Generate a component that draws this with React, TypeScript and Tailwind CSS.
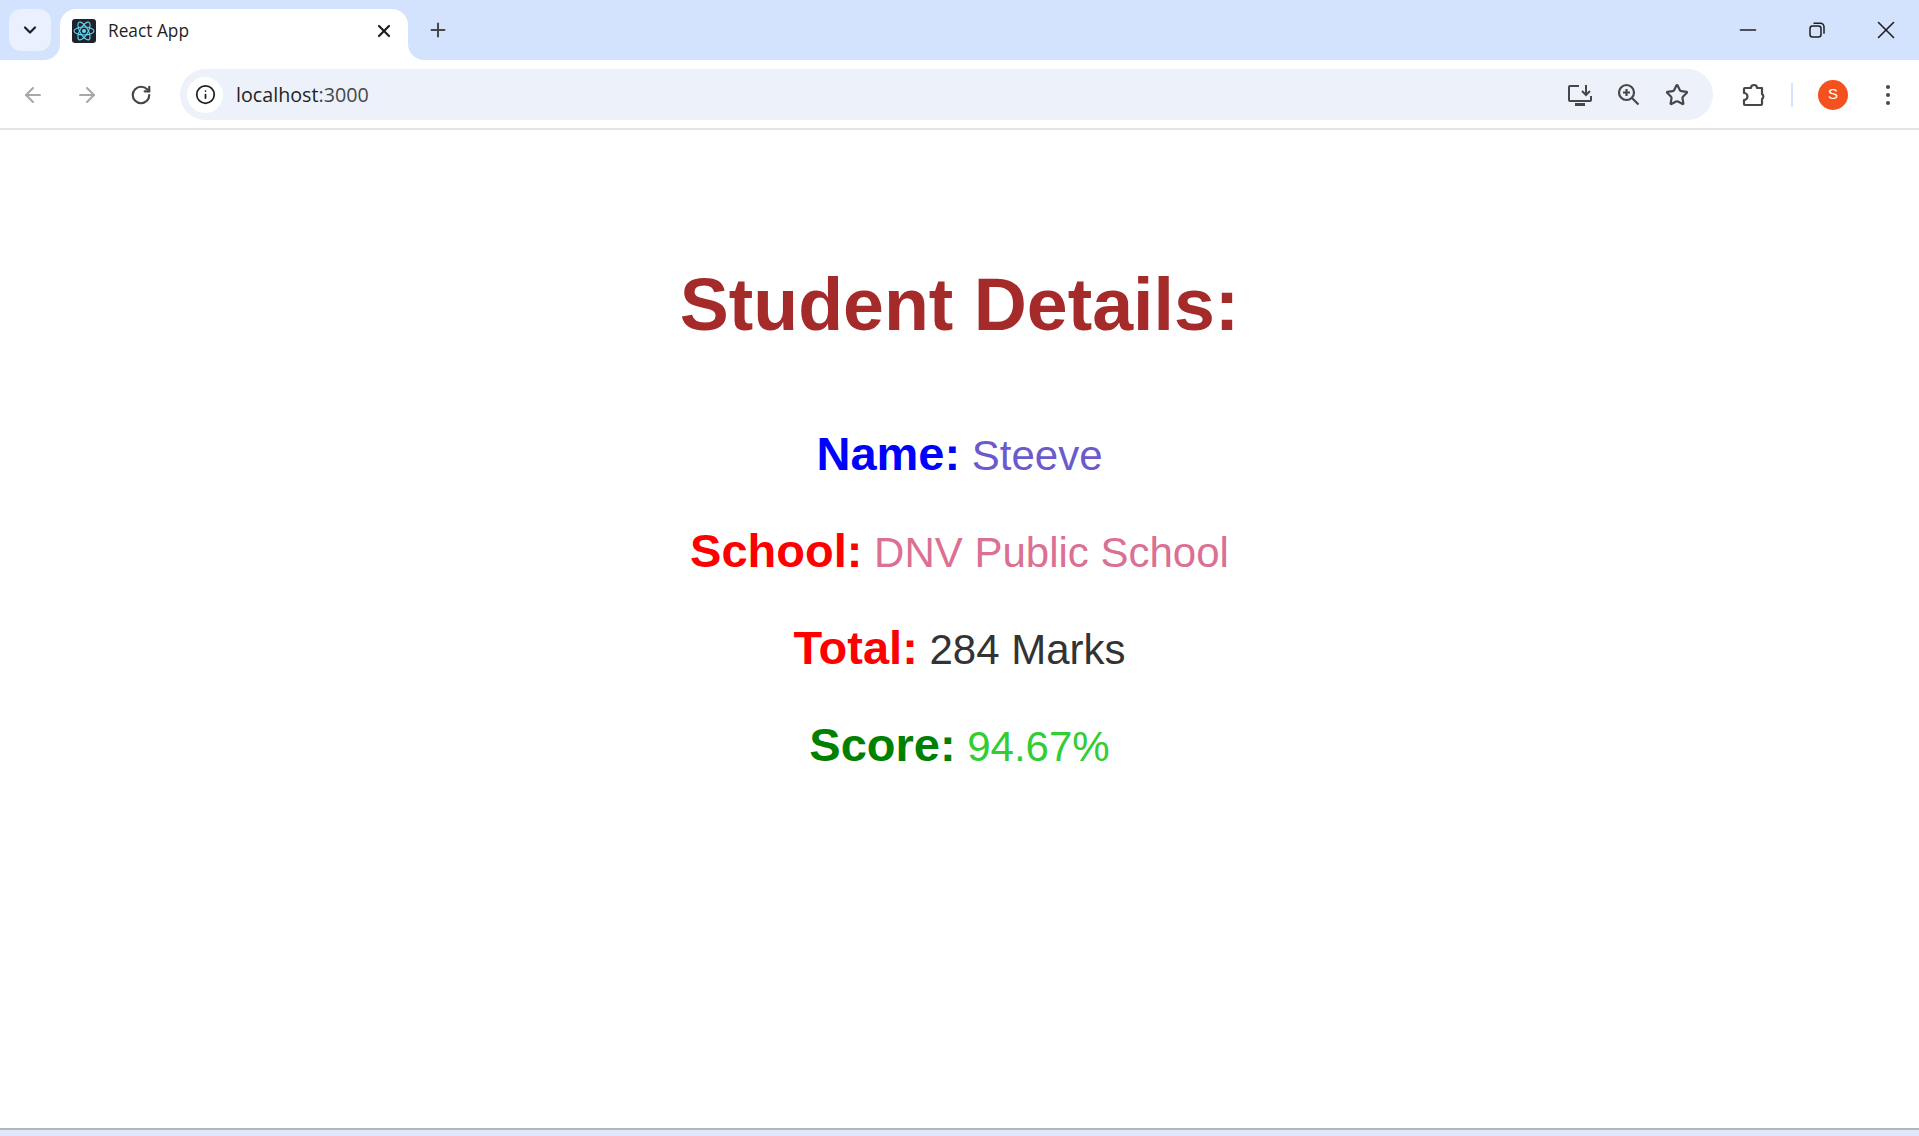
import { ChevronDown, X, Plus, ArrowLeft, ArrowRight, RotateCw, Info, Star, Minus } from "lucide-react";

const rows = [
  { label: "Name:", value: "Steeve", labelColor: "text-[#0000ff]", valueColor: "text-[#6a5acd]" },
  { label: "School:", value: "DNV Public School", labelColor: "text-[#ff0000]", valueColor: "text-[#db7093]" },
  { label: "Total:", value: "284 Marks", labelColor: "text-[#ff0000]", valueColor: "text-[#333333]" },
  { label: "Score:", value: "94.67%", labelColor: "text-[#008000]", valueColor: "text-[#32cd32]" },
];

function ReactFavicon() {
  return (
    <svg viewBox="0 0 24 24" className="h-6 w-6 rounded-[3px] bg-[#20232a]">
      <circle cx="12" cy="12" r="2" fill="#61dafb" />
      <g fill="none" stroke="#61dafb" strokeWidth="1.1">
        <ellipse cx="12" cy="12" rx="10" ry="4" />
        <ellipse cx="12" cy="12" rx="10" ry="4" transform="rotate(60 12 12)" />
        <ellipse cx="12" cy="12" rx="10" ry="4" transform="rotate(120 12 12)" />
      </g>
    </svg>
  );
}

function InstallIcon() {
  return (
    <svg viewBox="0 0 24 22" className="h-[22px] w-6" fill="none" stroke="#474747" strokeWidth="2">
      <path d="M11 2H2a1 1 0 0 0-1 1v13a1 1 0 0 0 1 1h20a1 1 0 0 0 1-1v-4" />
      <path d="M18 1v9M14 7l4 4 4-4" />
      <path d="M7 20.5h10" strokeWidth="3" />
    </svg>
  );
}

function ZoomGlyph() {
  return (
    <svg viewBox="0 0 24 24" className="ml-6 h-6 w-6" fill="none" stroke="#474747" strokeWidth="2.2">
      <circle cx="10.5" cy="9.5" r="7.5" />
      <path d="M16 15l6.5 6.5" />
      <path d="M10.5 6v7M7 9.5h7" />
    </svg>
  );
}

function ExtensionIcon() {
  return (
    <svg viewBox="0 0 24 24" className="h-6 w-6" fill="none" stroke="#474747" strokeWidth="2.2" strokeLinejoin="round">
      <path d="M3 5h6a3 3 0 0 1 6 0h5v6a3 3 0 0 1 0 5v5a1 1 0 0 1-1 1H3a1 1 0 0 1-1-1v-4a3.5 3.5 0 0 0 0-7V6a1 1 0 0 1 1-1z" />
    </svg>
  );
}

function RestoreIcon() {
  return (
    <svg viewBox="0 0 16 16" className="h-4 w-4" fill="none" stroke="#1f1f1f" strokeWidth="1.5">
      <rect x="1" y="4" width="11" height="11" rx="2.5" />
      <path d="M4.5 1.2h7a3.5 3.5 0 0 1 3.5 3.5v7" />
    </svg>
  );
}

function TabCorner({ side }: { side: "left" | "right" }) {
  return (
    <svg
      viewBox="0 0 16 16"
      className={side === "left" ? "absolute bottom-0 -left-4 h-4 w-4" : "absolute bottom-0 -right-4 h-4 w-4"}
    >
      <path d={side === "left" ? "M16 0v16H0a16 16 0 0 0 16-16z" : "M0 0v16h16A16 16 0 0 1 0 0z"} fill="#fff" />
    </svg>
  );
}

export default function App() {
  return (
    <div className="flex h-screen flex-col overflow-hidden bg-white font-['Liberation_Sans',Arial,sans-serif]">
      {/* tab strip */}
      <div className="flex h-[60px] shrink-0 bg-[#d3e3fd] pt-[9px]">
        <div className="ml-[9px] flex h-[42px] w-[42px] items-center justify-center rounded-xl bg-[#e9f0fe]">
          <ChevronDown className="h-5 w-5 text-[#1f1f1f]" strokeWidth={2.6} />
        </div>
        <div className="relative ml-[9px] flex h-[51px] w-[348px] items-center rounded-t-2xl bg-white pb-2 pl-3 pr-[14px]">
          <TabCorner side="left" />
          <TabCorner side="right" />
          <ReactFavicon />
          <span className="ml-3 font-['Open_Sans',sans-serif] text-[17.3px] text-[#1f1f1f]">React App</span>
          <X className="ml-auto h-5 w-5 text-[#1f1f1f]" strokeWidth={2.6} />
        </div>
        <div className="ml-[19px] flex h-[42px] items-center">
          <Plus className="h-[22px] w-[22px] text-[#474747]" strokeWidth={2.2} />
        </div>
        <div className="ml-auto flex h-[41px] items-center">
          <Minus className="h-[26px] w-[26px] text-[#1f1f1f]" strokeWidth={1.4} />
          <div className="ml-[48px]">
            <RestoreIcon />
          </div>
          <X className="ml-[46px] mr-[18px] h-[30px] w-[30px] text-[#1f1f1f]" strokeWidth={1.3} />
        </div>
      </div>

      {/* toolbar */}
      <div className="flex h-[70px] shrink-0 items-center rounded-t-xl border-b-2 border-[#e3e3e3] bg-white pl-[21px] pt-[1px]">
        <ArrowLeft className="h-6 w-6 text-[#a8a8a8]" strokeWidth={2} />
        <ArrowRight className="ml-[30px] h-6 w-6 text-[#a8a8a8]" strokeWidth={2} />
        <RotateCw className="ml-[31px] h-[22px] w-[22px] text-[#474747]" strokeWidth={2.4} />
        <div className="ml-[28px] flex h-[51px] w-[1533px] items-center rounded-full bg-[#ecf1fa] pl-[7px] pr-6">
          <div className="flex h-9 w-9 items-center justify-center rounded-full bg-white">
            <Info className="h-[21px] w-[21px] text-[#1f1f1f]" strokeWidth={2} />
          </div>
          <span className="ml-[13px] font-['Open_Sans',sans-serif] text-[19.7px] text-[#1f1f1f]">
            localhost<span className="text-[#474747]">:3000</span>
          </span>
          <div className="ml-auto flex items-center">
            <InstallIcon />
            <ZoomGlyph />
            <Star className="ml-[25px] h-6 w-6 text-[#474747]" strokeWidth={2.2} />
          </div>
        </div>
        <div className="ml-[29px]">
          <ExtensionIcon />
        </div>
        <div className="ml-[25px] h-6 w-[2px] bg-[#d3e3fd]" />
        <div className="ml-[25px] flex h-[30px] w-[30px] items-center justify-center rounded-full bg-[#f4511e] text-[15px] text-white">
          S
        </div>
        <div className="ml-[38px] flex flex-col gap-[4px]">
          <span className="h-1 w-1 rounded-full bg-[#474747]" />
          <span className="h-1 w-1 rounded-full bg-[#474747]" />
          <span className="h-1 w-1 rounded-full bg-[#474747]" />
        </div>
      </div>

      {/* page */}
      <main className="flex flex-1 flex-col items-center pt-[133px] text-center">
        <h1 className="text-[73.5px] leading-[1.15] font-bold text-[#a52a2a]">Student Details:</h1>
        <div className="mt-[80px] flex flex-col gap-[43px]">
          {rows.map((row) => (
            <p key={row.label} className="text-[42px] leading-[52px]">
              <span className={`text-[47px] font-bold ${row.labelColor}`}>{row.label}</span>{" "}
              <span className={row.valueColor}>{row.value}</span>
            </p>
          ))}
        </div>
      </main>

      <div className="h-[8px] shrink-0 border-t-2 border-[#b1b6c0] bg-[#dfe9fb]" />
    </div>
  );
}
